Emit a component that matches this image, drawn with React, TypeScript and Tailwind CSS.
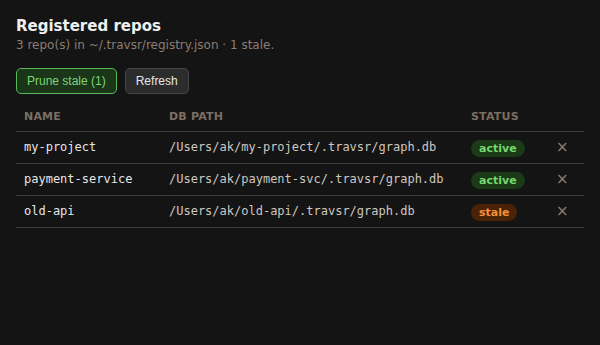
import React from "react";

const rows = [
  { name: "my-project", path: "/Users/ak/my-project/.travsr/graph.db", status: "active" },
  { name: "payment-service", path: "/Users/ak/payment-svc/.travsr/graph.db", status: "active" },
  { name: "old-api", path: "/Users/ak/old-api/.travsr/graph.db", status: "stale" },
];

export default function App() {
  return (
    <div
      className="min-h-[345px] w-[600px] bg-[#141414] px-4 pt-[15px] text-[#e8e8e8]"
      style={{ fontFamily: '"DejaVu Sans", sans-serif' }}
    >
      <h1 className="text-[15px] font-bold leading-[22px] text-[#efefef]">Registered repos</h1>
      <p className="text-[12px] leading-[16px] text-[#8a7d72]">
        3 repo(s) in ~/.travsr/registry.json · 1 stale.
      </p>
      <div className="mt-[15px] flex gap-2" style={{ fontFamily: '"Liberation Sans", Arial, sans-serif' }}>
        <button className="h-[26px] rounded-[5px] border border-[#55b955] bg-[#1a3517] px-[10px] text-[12px] text-[#7fd47a]">
          Prune stale (1)
        </button>
        <button className="h-[26px] rounded-[5px] border border-[#474747] bg-[#2c2c2c] px-[10px] text-[12px] text-[#e6e6e6]">
          Refresh
        </button>
      </div>
      <table className="mt-[10px] w-[568px] table-fixed border-collapse">
        <colgroup>
          <col className="w-[145px]" />
          <col className="w-[302px]" />
          <col className="w-[84px]" />
          <col className="w-[37px]" />
        </colgroup>
        <thead>
          <tr className="border-b border-[#3c3c3c]">
            {["NAME", "DB PATH", "STATUS", ""].map((h, i) => (
              <th
                key={i}
                className="h-[27px] px-2 text-left align-middle text-[11px] font-bold leading-[14px] tracking-[0.2px] text-[#7d6e62]"
              >
                {h}
              </th>
            ))}
          </tr>
        </thead>
        <tbody>
          {rows.map((r) => (
            <tr key={r.name} className="border-b border-[#3c3c3c]">
              <td
                className="h-[32px] px-2 align-middle text-[12px] text-[#e6e6e6]"
                style={{ fontFamily: '"DejaVu Sans Mono", monospace' }}
              >
                {r.name}
              </td>
              <td
                className="h-[32px] px-2 align-middle text-[12px] text-[#cfc7c0]"
                style={{ fontFamily: '"DejaVu Sans Mono", monospace' }}
              >
                {r.path}
              </td>
              <td className="h-[32px] px-2 align-middle">
                {r.status === "active" ? (
                  <span className="inline-block rounded-full bg-[#1b3a17] px-2 text-[11px] font-bold leading-[17px] text-[#74d870]">
                    active
                  </span>
                ) : (
                  <span className="inline-block rounded-full bg-[#4a2206] px-2 text-[11px] font-bold leading-[17px] text-[#f2923a]">
                    stale
                  </span>
                )}
              </td>
              <td className="h-[32px] pl-[9px] align-middle text-[15px] leading-none text-[#8a7d72]">×</td>
            </tr>
          ))}
        </tbody>
      </table>
    </div>
  );
}
